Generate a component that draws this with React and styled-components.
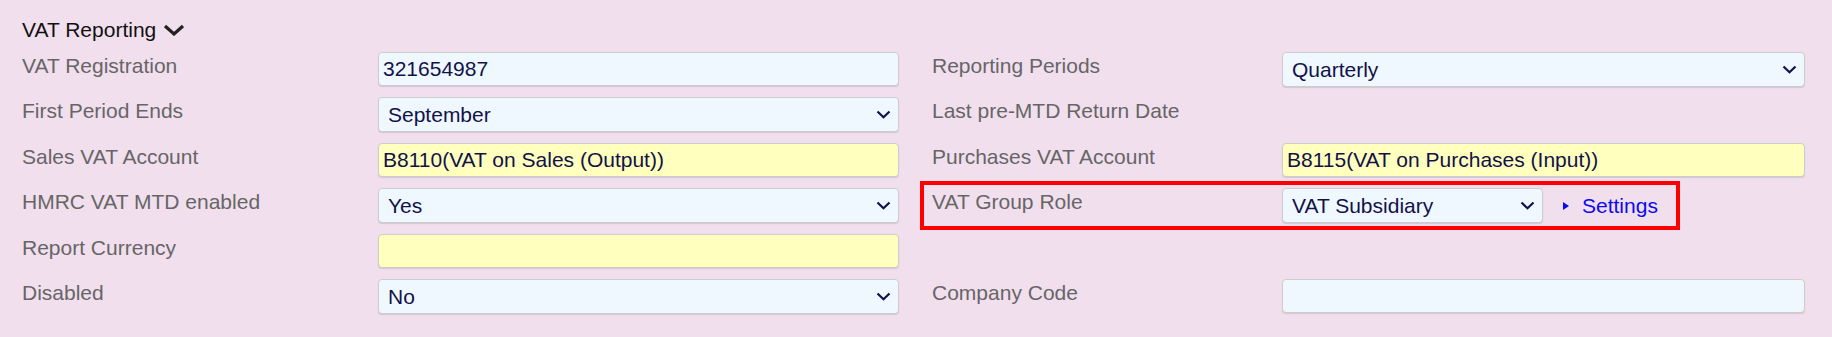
import styled, { createGlobalStyle } from 'styled-components';

const GlobalStyle = createGlobalStyle`
  body {
    margin: 0;
    background: #f2dfee;
    font-family: "Liberation Sans", Arial, sans-serif;
  }
`;

const Panel = styled.section`
  box-sizing: border-box;
  min-height: 337px;
  padding: 18px 27px 12px 22px;
`;

const Heading = styled.h3`
  display: flex;
  align-items: center;
  gap: 7px;
  margin: 0 0 10px;
  font-size: 21px;
  line-height: 24px;
  font-weight: normal;
  color: #111;
`;

const Form = styled.div`
  display: grid;
  grid-auto-rows: 45.4px;
`;

const Row = styled.div`
  display: grid;
  grid-template-columns: 877px 873px;
  column-gap: 33px;
  align-items: start;
`;

const Pair = styled.div`
  display: grid;
  grid-template-columns: ${p => p.$labelWidth}px 1fr;
  align-items: start;
`;

const HighlightPair = styled(Pair)`
  justify-self: start;
  grid-template-columns: ${p => p.$labelWidth}px auto;
  margin-left: -5px;
  padding: 0 15px 0 5px;
  outline: 4px solid #ff0000;
  outline-offset: 3px;
`;

const Label = styled.div`
  padding-top: 2px;
  font-size: 21px;
  line-height: 24px;
  color: #666;
`;

const TextInput = styled.input`
  box-sizing: border-box;
  width: 100%;
  height: 34px;
  margin: 0;
  padding: 0 4px;
  border: 1px solid #cdcdcd;
  border-radius: 4px;
  background: ${p => (p.$required ? '#ffffbe' : '#f0f8ff')};
  box-shadow: 0 1px 1px rgba(0, 0, 0, 0.12);
  font-family: inherit;
  font-size: 21px;
  color: #12124a;
  outline: none;
`;

const SelectWrap = styled.div`
  position: relative;
  width: ${p => (p.$width ? `${p.$width}px` : '100%')};
`;

const Select = styled.select`
  appearance: none;
  box-sizing: border-box;
  width: 100%;
  height: 35px;
  margin: 0;
  padding: 0 30px 0 9px;
  border: 1px solid #cdcdcd;
  border-radius: 4px;
  background: #f0f8ff;
  box-shadow: 0 1px 1px rgba(0, 0, 0, 0.12);
  font-family: inherit;
  font-size: 21px;
  color: #12124a;
  outline: none;
`;

const Caret = styled.svg`
  position: absolute;
  right: 8px;
  top: 13px;
  pointer-events: none;
`;

const FieldLine = styled.div`
  display: flex;
  align-items: center;
  gap: 20px;
`;

const LinkButton = styled.a`
  display: flex;
  align-items: center;
  gap: 13px;
  font-size: 21px;
  line-height: 24px;
  color: #0b0bf2;
  text-decoration: none;
  cursor: pointer;
`;

function Dropdown({ value, options, width }) {
  return (
    <SelectWrap $width={width}>
      <Select defaultValue={value}>
        {options.map(o => (
          <option key={o}>{o}</option>
        ))}
      </Select>
      <Caret width="15" height="9" viewBox="0 0 15 9">
        <path d="M1.5 1.5 L7.5 7.3 L13.5 1.5" fill="none" stroke="#12124a" strokeWidth="2.2" />
      </Caret>
    </SelectWrap>
  );
}

function Field({ field }) {
  if (!field) return null;
  if (field.type === 'select') return <Dropdown value={field.value} options={field.options} />;
  if (field.type === 'input') {
    return <TextInput readOnly defaultValue={field.value} $required={field.required} />;
  }
  return null;
}

const months = ['January', 'February', 'March', 'April', 'May', 'June', 'July', 'August', 'September', 'October', 'November', 'December'];

const rows = [
  {
    left: { label: 'VAT Registration', type: 'input', value: '321654987' },
    right: { label: 'Reporting Periods', type: 'select', value: 'Quarterly', options: ['Monthly', 'Quarterly', 'Annually'] },
  },
  {
    left: { label: 'First Period Ends', type: 'select', value: 'September', options: months },
    right: { label: 'Last pre-MTD Return Date' },
  },
  {
    left: { label: 'Sales VAT Account', type: 'input', value: 'B8110(VAT on Sales (Output))', required: true },
    right: { label: 'Purchases VAT Account', type: 'input', value: 'B8115(VAT on Purchases (Input))', required: true },
  },
  {
    left: { label: 'HMRC VAT MTD enabled', type: 'select', value: 'Yes', options: ['Yes', 'No'] },
    right: { label: 'VAT Group Role', type: 'group' },
  },
  {
    left: { label: 'Report Currency', type: 'input', value: '', required: true },
    right: null,
  },
  {
    left: { label: 'Disabled', type: 'select', value: 'No', options: ['Yes', 'No'] },
    right: { label: 'Company Code', type: 'input', value: '' },
  },
];

function App() {
  return (
    <Panel>
      <GlobalStyle />
      <Heading>
        VAT Reporting
        <svg width="22" height="12" viewBox="0 0 22 12">
          <path d="M2 2 L11 10 L20 2" fill="none" stroke="#222" strokeWidth="3.2" />
        </svg>
      </Heading>
      <Form>
        {rows.map(({ left, right }) => (
          <Row key={left.label}>
            <Pair $labelWidth={356}>
              <Label>{left.label}</Label>
              <Field field={left} />
            </Pair>
            {right && right.type === 'group' ? (
              <HighlightPair $labelWidth={350}>
                <Label>{right.label}</Label>
                <FieldLine>
                  <Dropdown value="VAT Subsidiary" width={261} options={['None', 'VAT Parent', 'VAT Subsidiary']} />
                  <LinkButton>
                    <svg width="6" height="8" viewBox="0 0 6 8">
                      <polygon points="0,0 6,4 0,8" fill="#0b0bf2" />
                    </svg>
                    Settings
                  </LinkButton>
                </FieldLine>
              </HighlightPair>
            ) : right ? (
              <Pair $labelWidth={350}>
                <Label>{right.label}</Label>
                <Field field={right} />
              </Pair>
            ) : (
              <div />
            )}
          </Row>
        ))}
      </Form>
    </Panel>
  );
}

export default App;
